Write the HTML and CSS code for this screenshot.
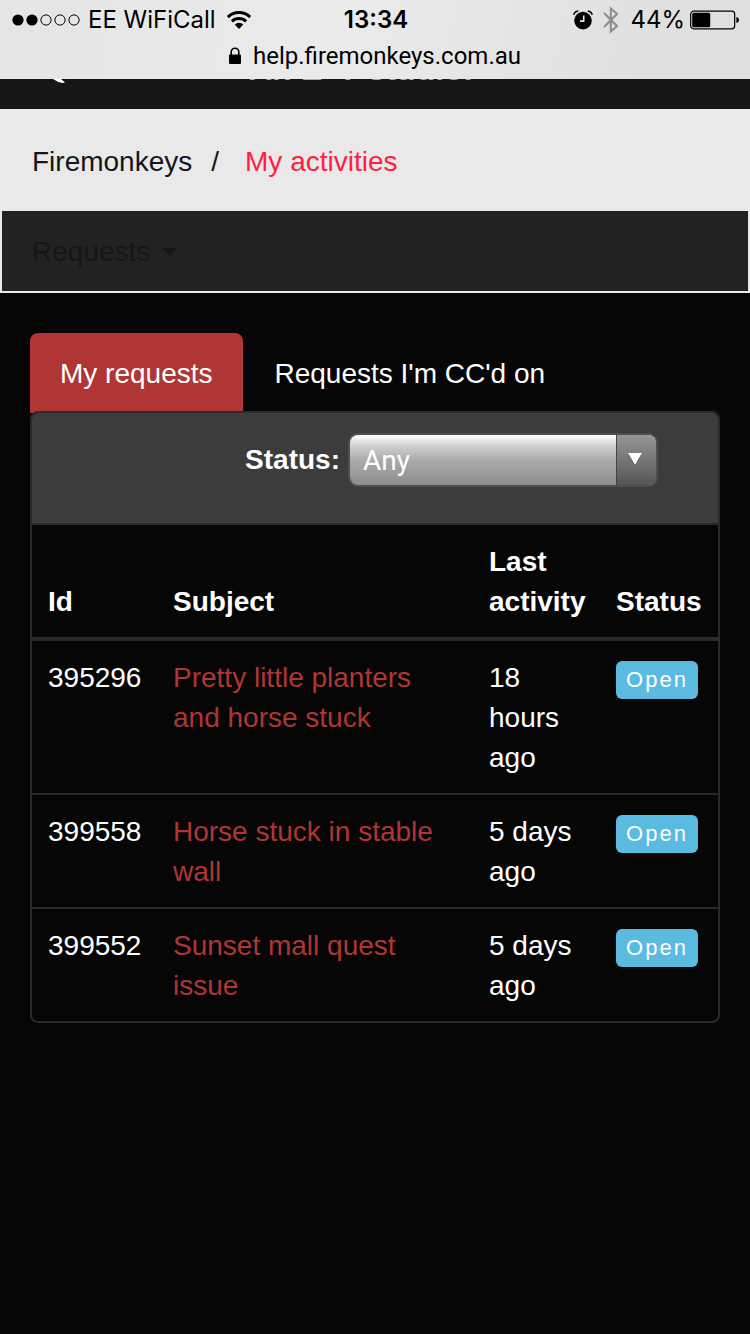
FILE: index.html
```html
<!DOCTYPE html>
<html lang="en">
<head>
<meta charset="utf-8">
<meta name="viewport" content="width=device-width, initial-scale=1">
<title>My activities</title>
<link rel="stylesheet" href="styles.css">
</head>
<body>
<div class="chrome">
  <div class="status-bar">
    <div class="status-left">
      <svg class="signal" width="69" height="14" viewBox="0 0 69 14" aria-hidden="true">
        <circle cx="6" cy="7" r="5.6"/><circle cx="20" cy="7" r="5.6"/>
        <g fill="none" stroke="#000" stroke-width="1"><circle cx="34" cy="7" r="5.1"/><circle cx="48" cy="7" r="5.1"/><circle cx="62" cy="7" r="5.1"/></g>
      </svg>
      <span class="carrier">EE WiFiCall</span>
      <svg width="26" height="20" viewBox="0 0 26 20" aria-hidden="true">
        <g fill="none" stroke="#000" stroke-width="3"><path d="M1.9 7.1a15.8 15.8 0 0 1 22.2 0"/><path d="M5.9 11.3a10.2 10.2 0 0 1 14.2 0"/></g>
        <path d="M13 19l-4.3-4.4a6.2 6.2 0 0 1 8.6 0z"/>
      </svg>
    </div>
    <div class="clock">13:34</div>
    <div class="status-right">
      <svg width="20" height="20" viewBox="0 0 20 20" aria-hidden="true">
        <circle cx="10" cy="10.6" r="8.8"/>
        <path d="M10.7 5.4v5.7H7" fill="none" stroke="#e3e3e3" stroke-width="1.6"/>
        <path d="M.8 4.8Q1.4 1.6 5.2 1M19.2 4.8Q18.6 1.6 14.8 1" fill="none" stroke="#000" stroke-width="1.5"/>
      </svg>
      <svg class="bluetooth" width="16" height="28" viewBox="0 0 16 28" aria-hidden="true">
        <path d="M1 7l13 13-6.2 5.6V2.4L14 8 1 21" fill="none" stroke="#8c8c8c" stroke-width="2"/>
      </svg>
      <span>44%</span>
      <svg width="50" height="20" viewBox="0 0 50 20" aria-hidden="true">
        <rect x=".7" y="1.2" width="44" height="17.6" rx="3" fill="none" stroke="#000" stroke-width="1.2"/>
        <rect x="2.2" y="2.8" width="18" height="14.4" rx="1.5"/>
        <path d="M46.4 7q2.6.5 2.6 3t-2.6 3z"/>
      </svg>
    </div>
  </div>
  <div class="address">
    <svg width="12" height="18" viewBox="0 0 12 18" aria-hidden="true">
      <rect x="0" y="7.6" width="12" height="9.4" rx="1"/>
      <path d="M2.2 8.4V5a3.8 3.8 0 0 1 7.6 0v3.4" fill="none" stroke="#000" stroke-width="1.6"/>
    </svg>
    <span>help.firemonkeys.com.au</span>
  </div>
</div>

<header class="site-header">
  <svg class="header-icon" width="14" height="5" viewBox="0 0 14 5" aria-hidden="true"><path d="M0 0h8l4 3.4-2.4.6Q4 3 0 0z" fill="#fff"/></svg>
  <div class="brand"><span>An</span><span class="brand-mark">E</span><span class="brand-mark">Y</span><span>studio.</span></div>
</header>

<nav class="breadcrumbs" aria-label="Breadcrumb">
  <a href="#">Firemonkeys</a><span class="slash">/</span><a class="current" href="#">My activities</a>
</nav>

<nav class="subnav">
  <button class="menu" type="button">Requests
    <svg width="16" height="8" viewBox="0 0 16 8" aria-hidden="true"><path d="M0 0h16L8 8z" fill="currentColor"/></svg>
  </button>
</nav>

<main class="content">
  <div class="tabs">
    <a class="tab active" href="#">My requests</a>
    <a class="tab" href="#">Requests I'm CC'd on</a>
  </div>
  <section class="panel">
    <form class="filter">
      <label for="status">Status:</label>
      <div class="picker">
        <select id="status"><option>Any</option><option>Open</option></select>
        <span class="picker-arrow"><svg width="14" height="13" viewBox="0 0 14 13" aria-hidden="true"><path d="M0 1h14L7 13z" fill="#444"/><path d="M0 0h14L7 12z" fill="#fff"/></svg></span>
      </div>
    </form>
    <table class="requests">
      <thead>
        <tr><th class="col-id">Id</th><th>Subject</th><th class="col-activity">Last activity</th><th class="col-status">Status</th></tr>
      </thead>
      <tbody>
        <tr><td>395296</td><td><a href="#">Pretty little planters and horse stuck</a></td><td>18 hours ago</td><td><span class="badge">Open</span></td></tr>
        <tr><td>399558</td><td><a href="#">Horse stuck in stable wall</a></td><td>5 days ago</td><td><span class="badge">Open</span></td></tr>
        <tr><td>399552</td><td><a href="#">Sunset mall quest issue</a></td><td>5 days ago</td><td><span class="badge">Open</span></td></tr>
      </tbody>
    </table>
  </section>
</main>
</body>
</html>
```
FILE: styles.css
```css
* { box-sizing: border-box; }

body {
  margin: 0;
  min-height: 100vh;
  background: #060606;
  color: #fff;
  font: 28px/40px "Liberation Sans", Arial, sans-serif;
}

a { color: inherit; text-decoration: none; }
svg { display: block; flex: none; }

.chrome {
  padding-bottom: 7px;
  background: linear-gradient(100deg, #e5e5e5, #ebebeb 45%, #e0e0e0 85%);
  color: #000;
  font: 24px/32px Inter, sans-serif;
}

.status-bar {
  display: grid;
  grid-template-columns: 1fr auto 1fr;
  align-items: center;
  height: 40px;
  padding: 0 10px 0 12px;
}

.status-left, .status-right { display: flex; align-items: center; gap: 7px; }
.status-right { justify-content: flex-end; gap: 5px; }
.carrier { margin-right: 3px; }
.bluetooth { margin: 0 6px 0 5px; }
.clock { font-weight: 600; }

.address {
  display: flex;
  align-items: center;
  justify-content: center;
  gap: 12px;
  font-family: Roboto, sans-serif;
}

.site-header {
  display: flex;
  align-items: flex-start;
  height: 30px;
  padding-left: 53px;
  background: #161616;
  overflow: hidden;
}

.brand {
  display: flex;
  gap: 4px;
  margin: -26px 0 0 182px;
  color: #a9acab;
  font-size: 32px;
  font-weight: bold;
  line-height: 32px;
}

.brand-mark { width: 32px; text-align: center; }

.breadcrumbs {
  display: flex;
  padding: 33px 32px 29px;
  background: #e9e9e9;
  color: #161616;
}

.slash { margin: 0 26px 0 19px; }
.current { color: #ff1f40; }

.subnav {
  padding: 21px 30px 19px;
  background: #222;
  border: solid #e9e9e9;
  border-width: 0 2px 2px;
}

.menu {
  display: flex;
  align-items: center;
  gap: 12px;
  padding: 0;
  background: none;
  border: 0;
  color: #161616;
  font: inherit;
}

.content { padding: 40px 30px; }

.tabs { display: flex; gap: 2px; }

.tab {
  padding: 21px 30px 17px;
  border-radius: 8px 8px 0 0;
}

.tab.active {
  background: #b03535;
  box-shadow: 0 2px #b03535;
}

.panel {
  position: relative;
  background: #060606;
  border: 2px solid #2a2a2a;
  border-radius: 8px;
  overflow: hidden;
}

.filter {
  display: flex;
  align-items: center;
  justify-content: flex-end;
  gap: 8px;
  padding: 20px 60px 36px 16px;
  background: #3c3c3c;
  border-bottom: 2px solid #2a2a2a;
}

.filter label { font-weight: bold; }

.picker {
  position: relative;
  width: 310px;
  border: 2px solid #4f4f4f;
  border-radius: 10px;
  overflow: hidden;
}

.picker select {
  display: block;
  width: 100%;
  height: 50px;
  padding: 2px 56px 0 13px;
  appearance: none;
  background: linear-gradient(#fff, #d2d2d2 20%, #ababab 50%, #8d8d8d);
  border: 0;
  border-radius: 0;
  color: #fff;
  font: 28px/40px Roboto, sans-serif;
}

.picker-arrow {
  position: absolute;
  inset: 0 0 0 auto;
  display: flex;
  align-items: center;
  width: 40px;
  padding: 0 0 2px 11px;
  background: linear-gradient(#969696, #555);
  border-left: 1px solid #444;
  pointer-events: none;
}

.requests {
  width: 100%;
  table-layout: fixed;
  border-spacing: 0;
  text-align: left;
}

th, td { padding: 17px 16px 15px; vertical-align: top; }
th { vertical-align: bottom; border-bottom: 4px solid #2a2a2a; }
tr + tr td { border-top: 2px solid #2a2a2a; }
td a { color: #b03535; }

.col-id { width: 125px; }
.col-activity { width: 127px; }
.col-status { width: 118px; }

.badge {
  display: block;
  width: 82px;
  margin-top: 3px;
  background: #5bbae0;
  border-radius: 6px;
  font-size: 22px;
  line-height: 38px;
  letter-spacing: 2px;
  text-align: center;
}
```
